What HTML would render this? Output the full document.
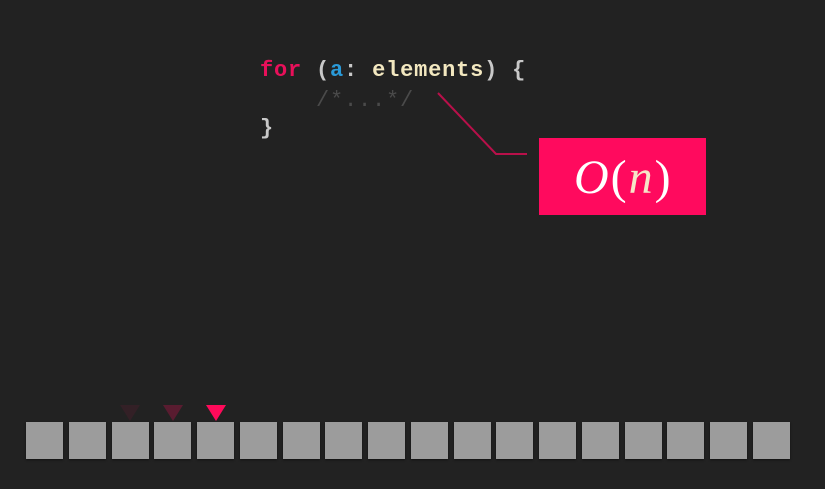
<!DOCTYPE html>
<html><head><style>
html,body{margin:0;padding:0;background:#222222;width:825px;height:489px;overflow:hidden;position:relative;font-family:"Liberation Mono",monospace}
.code{position:absolute;left:260px;font-weight:bold;font-size:22px;letter-spacing:0.8px;white-space:pre;line-height:22px;color:#c8c8c8}
.sq{position:absolute;top:422px;width:37px;height:37px;background:#9c9c9c;box-shadow:0 1px 2px rgba(0,0,0,.5)}
.tri{position:absolute;top:405px;width:0;height:0;border-left:10px solid transparent;border-right:10px solid transparent;border-top:16px solid #ff0a5a}
</style></head><body>
<div class="code" style="top:60px"><span style="color:#e8105a">for</span> (<span style="color:#2a9ad8">a</span>: <span style="color:#f3e8c0">elements</span>) {</div>
<div class="code" style="top:90px;color:#4a4a4a;font-weight:normal">    /*...*/</div>
<div class="code" style="top:118px">}</div>
<svg style="position:absolute;left:0;top:0" width="825" height="489"><polyline points="438,93 496,154 527,154" fill="none" stroke="#b8104a" stroke-width="2"/></svg>
<div style="position:absolute;left:539px;top:138px;width:167px;height:77px;background:#ff0a5e"></div>
<div style="position:absolute;left:574px;top:148px;font-family:'Liberation Serif',serif;font-size:48px;color:#fff;line-height:60px;letter-spacing:2px"><i>O</i>(<i style="color:#f6e6c8">n</i>)</div>
<div id="sqs"></div>
<div class="tri" style="left:120px;opacity:.08"></div>
<div class="tri" style="left:163px;opacity:.25"></div>
<div class="tri" style="left:206px"></div>
<script>
var h='';for(var i=0;i<18;i++){h+='<div class="sq" style="left:'+(26+42.75*i).toFixed(1)+'px"></div>';}
document.getElementById('sqs').innerHTML=h;
</script>
</body></html>
